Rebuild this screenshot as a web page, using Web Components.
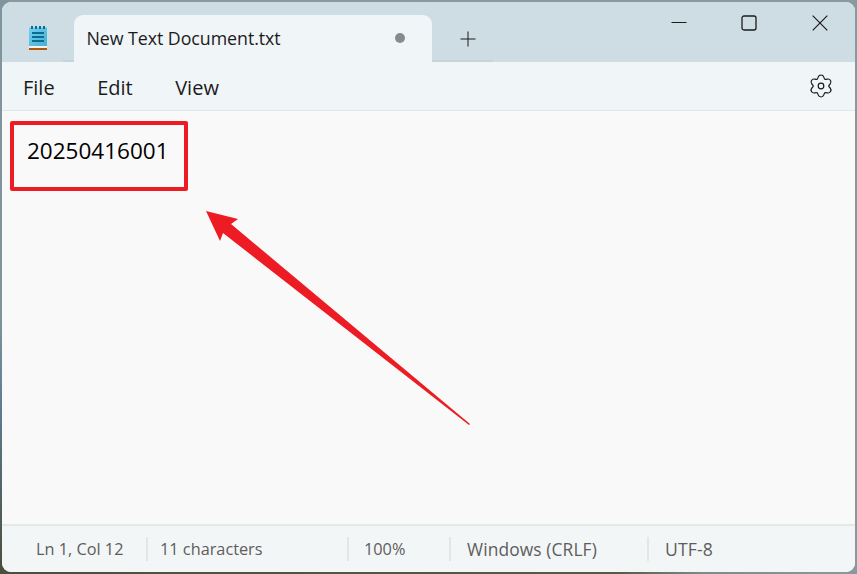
<!DOCTYPE html>
<html>
<head>
<meta charset="utf-8">
<title>Notepad</title>
<style>
  html, body { margin: 0; height: 100%; }
  body {
    width: 857px; height: 574px; overflow: hidden;
    background:
      linear-gradient(90deg, #4b4e3c 0, #565a45 72%, #7d8b8c 82%, #8a999d 100%) left bottom / 100% 14px no-repeat,
      linear-gradient(180deg, #7f949c 0, #7f949c 55%, #5f7f90 70%, #566a70 82%, #4b4e3c 100%) left top / 10px 100% no-repeat,
      #89999f;
    font-family: "Open Sans", "Noto Sans", sans-serif;
  }
</style>
</head>
<body>
<notepad-window>
  <notepad-titlebar slot="title" tab="New Text Document.txt"></notepad-titlebar>
  <notepad-menubar slot="menu"></notepad-menubar>
  <notepad-editor slot="editor">20250416001</notepad-editor>
  <notepad-statusbar slot="status"></notepad-statusbar>
</notepad-window>

<script>
// smooth six tooth gear outline
function gearPath(cx, cy) {
  const pts = [];
  for (let i = 0; i < 6; i++) {
    const a = 90 + i * 60;
    [[-27, 7.7], [-11, 11.2], [11, 11.2], [27, 7.7]].forEach(([d, r]) => {
      const t = (a + d) * Math.PI / 180;
      pts.push([cx + r * Math.cos(t), cy - r * Math.sin(t)]);
    });
  }
  const mid = (p, q) => ((p[0] + q[0]) / 2).toFixed(2) + ' ' + ((p[1] + q[1]) / 2).toFixed(2);
  let d = 'M' + mid(pts[0], pts[1]);
  for (let i = 1; i <= pts.length; i++) {
    const p = pts[i % pts.length], q = pts[(i + 1) % pts.length];
    d += 'Q' + p[0].toFixed(2) + ' ' + p[1].toFixed(2) + ' ' + mid(p, q);
  }
  return d + 'Z';
}

class NotepadWindow extends HTMLElement {
  constructor() {
    super();
    this.attachShadow({ mode: 'open' });
    this.shadowRoot.innerHTML = `
      <style>
        :host {
          display: flex; flex-direction: column;
          box-sizing: border-box;
          width: 853px; height: 570px; margin: 2px;
          border-radius: 9px; overflow: hidden;
          background: #f9f9f9;
        }
        ::slotted([slot=editor]) { flex: 1; min-height: 0; }
      </style>
      <slot name="title"></slot>
      <slot name="menu"></slot>
      <slot name="editor"></slot>
      <slot name="status"></slot>
    `;
  }
}

class NotepadTitlebar extends HTMLElement {
  constructor() {
    super();
    this.attachShadow({ mode: 'open' });
    this.shadowRoot.innerHTML = `
      <style>
        :host {
          display: flex; align-items: flex-end;
          height: 60px; background: #cedde3; color: #1b1b1b;
        }
        .appicon { width: 72px; height: 47px; display: flex; justify-content: center; align-items: flex-start; padding-top: 11px; box-sizing: border-box; position: relative; }
        .appicon::after { content: ""; position: absolute; right: 0; bottom: 0; width: 11px; height: 2px; background: #c4d4da; border-radius: 0 0 3px 0; }
        .tab {
          width: 358px; height: 47px; box-sizing: border-box;
          background: #f0f5f8; border-radius: 9px 9px 0 0;
          display: flex; align-items: center; padding: 0 27px 0 12.5px;
          font-size: 17.8px; font-weight: 500; letter-spacing: -.05px;
        }
        .name { flex: 1; margin-top: -1px; }
        .dot { width: 10px; height: 10px; border-radius: 50%; background: #888b8d; margin-top: -1px; }
        .plus { width: 72px; height: 47px; display: flex; justify-content: center; align-items: center; position: relative; }
        .plus::after { content: ""; position: absolute; left: 0; right: 11px; bottom: 0; height: 2px; background: #c4d4da; border-radius: 0 0 0 3px; }
        .spacer { flex: 1; }
        .caps { align-self: flex-start; display: flex; padding-top: 13px; margin-right: 27px; }
        .caps svg + svg { margin-left: 54px; }
        .caps svg:last-child { margin-left: 55px; }
        svg { display: block; }
      </style>
      <div class="appicon">
        <svg width="20" height="24" viewBox="0 0 20 24">
          <defs><linearGradient id="pad" x1="0" y1="0" x2="1" y2="1"><stop offset="0" stop-color="#72d0f0"/><stop offset="1" stop-color="#46b0d4"/></linearGradient></defs>
          <rect x="1" y="1.5" width="18" height="18.5" fill="url(#pad)"/>
          <rect x="3" y="0" width="2" height="3" fill="#0a6d8f"/>
          <rect x="7" y="0" width="2" height="3" fill="#0a6d8f"/>
          <rect x="11" y="0" width="2" height="3" fill="#0a6d8f"/>
          <rect x="15" y="0" width="2" height="3" fill="#0a6d8f"/>
          <rect x="4" y="6" width="12" height="2" fill="#0a6d8f"/>
          <rect x="4" y="10" width="12" height="2" fill="#0a6d8f"/>
          <rect x="4" y="14" width="12" height="2" fill="#0a6d8f"/>
          <rect x="1" y="20" width="18" height="2" fill="#f6f2ea"/>
          <rect x="1" y="22" width="18" height="2" fill="#b0560f"/>
        </svg>
      </div>
      <div class="tab"><span class="name">${this.getAttribute('tab')}</span><span class="dot"></span></div>
      <div class="plus">
        <svg width="16" height="16" viewBox="0 0 16 16" stroke="#1b1b1b" stroke-width="1" fill="none"><path d="M8 .5V15.5M.5 8H15.5"/></svg>
      </div>
      <div class="spacer"></div>
      <div class="caps">
        <svg width="16" height="16" viewBox="0 0 16 16" stroke="#1b1b1b" stroke-width="1.2" fill="none"><path d="M.5 7.5H15.5"/></svg>
        <svg width="16" height="16" viewBox="0 0 16 16" stroke="#1b1b1b" stroke-width="1.3" fill="none"><rect x="1" y="1" width="14" height="14" rx="2"/></svg>
        <svg width="16" height="16" viewBox="0 0 16 16" stroke="#1b1b1b" stroke-width="1.2" fill="none"><path d="M.7 .7L15.3 15.3M15.3 .7L.7 15.3"/></svg>
      </div>
    `;
  }
}

class NotepadMenubar extends HTMLElement {
  constructor() {
    super();
    this.attachShadow({ mode: 'open' });
    this.shadowRoot.innerHTML = `
      <style>
        :host {
          display: flex; align-items: center;
          height: 49px; box-sizing: border-box;
          background: #f0f5f8; border-bottom: 1px solid #e0e6e8;
          color: #1b1b1b; font-size: 20px;
          padding: 0 22px 0 21px; gap: 42.5px;
        }
        span { margin-top: 2px; }
        .gear { margin-left: auto; }
        svg { display: block; }
      </style>
      <span>File</span><span>Edit</span><span>View</span>
      <svg class="gear" width="24" height="24" viewBox="0 0 24 24" fill="none" stroke="#1b1b1b" stroke-width="1.2" stroke-linejoin="round">
        <path d="${gearPath(12, 12)}"/>
        <circle cx="12" cy="12" r="2.8"/>
      </svg>
    `;
  }
}

class NotepadEditor extends HTMLElement {
  constructor() {
    super();
    this.attachShadow({ mode: 'open' });
    this.shadowRoot.innerHTML = `
      <style>
        :host {
          display: block; position: relative;
          background: #f9f9f9; color: #000;
          padding: 24px 25px; box-sizing: border-box;
          font: 22.5px/32px "Open Sans", "Noto Sans", sans-serif;
        }
        .mark { position: absolute; left: 8px; top: 10px; width: 178px; height: 70px; box-sizing: border-box; border: 4px solid #ed1c24; border-radius: 2px; }
        svg { position: absolute; left: -2px; top: -111px; }
      </style>
      <slot></slot>
      <div class="mark"></div>
      <svg width="857" height="574" viewBox="0 0 857 574">
        <path d="M206 211L238 219L231 224L470 424L469 425L223 233L220 241Z" fill="#ed1c24"/>
      </svg>
    `;
  }
}

class NotepadStatusbar extends HTMLElement {
  constructor() {
    super();
    this.attachShadow({ mode: 'open' });
    this.shadowRoot.innerHTML = `
      <style>
        :host {
          display: flex; align-items: center;
          height: 48px; box-sizing: border-box;
          background: #f3f6f7; border-top: 2px solid #e3e8ea;
          color: #5d5d5d; font-size: 16.3px;
          padding-left: 34px;
        }
        .cell { height: 24px; line-height: 24px; box-sizing: border-box; white-space: nowrap; }
        .sep { border-left: 2px solid #e3e6e8; padding-left: 12px; }
      </style>
      <div class="cell" style="width: 110px">Ln 1, Col 12</div>
      <div class="cell sep" style="width: 201px">11 characters</div>
      <div class="cell sep" style="width: 102px; padding-left: 15px">100%</div>
      <div class="cell sep" style="width: 198px; padding-left: 16px; font-size: 17.4px; letter-spacing: .1px">Windows (CRLF)</div>
      <div class="cell sep" style="padding-left: 16px; font-size: 17.6px; letter-spacing: .1px">UTF-8</div>
    `;
  }
}

customElements.define('notepad-window', NotepadWindow);
customElements.define('notepad-titlebar', NotepadTitlebar);
customElements.define('notepad-menubar', NotepadMenubar);
customElements.define('notepad-editor', NotepadEditor);
customElements.define('notepad-statusbar', NotepadStatusbar);
</script>
</body>
</html>
